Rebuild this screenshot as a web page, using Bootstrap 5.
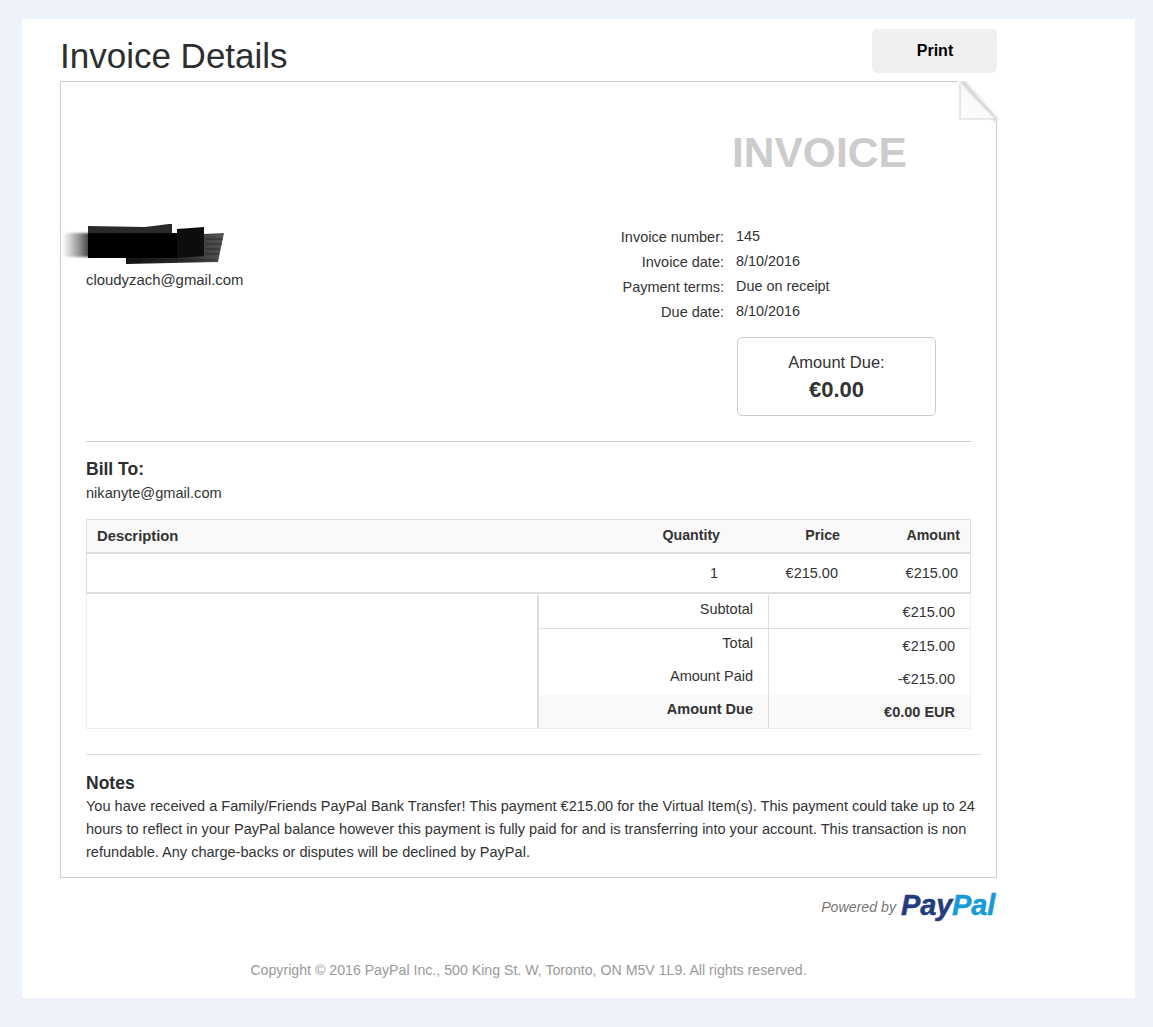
<!DOCTYPE html>
<html lang="en">
<head>
<meta charset="utf-8">
<title>Invoice Details</title>
<link href="https://cdn.jsdelivr.net/npm/bootstrap@5.3.0/dist/css/bootstrap.min.css" rel="stylesheet">
<style>
html,body{height:100%}
body{background:#eef2fa;font-family:"Liberation Sans",Arial,sans-serif;font-size:14.5px;color:#333;padding:19px 18px 29px 22px;}
.sheet{background:#fff;height:979px;padding:10px 138px 0 38px;}
.top-line{height:52px}
.page-title{font-size:35px;line-height:1;font-weight:400;margin:0;padding-top:9px;color:#2c2e2f}
.print-btn{width:125px;height:44px;background:#efefef;border:0;border-radius:5px;font-weight:700;font-size:16px;color:#000;padding:0 0 0 1px}
.paper{position:relative;border:1px solid #ccc;height:797px;padding:0 25px}
.fold{position:absolute;top:-1px;right:-2px;width:41px;height:44px}
.inv-word{font-size:42.5px;font-weight:700;color:#ccc;line-height:48px;padding:47px 0 0 646px;margin:0;height:105px}
.head-grid{height:254px}
.sender-col{padding-top:35px}
.redact{display:block;margin:0 0 0 -26px}
.sender-mail{font-size:14.9px;margin-top:-1px}
.meta-list{width:351px;padding-top:38px}
.meta-line{display:flex;height:25px;line-height:25px}
.meta-line .lbl{width:104px;text-align:right;white-space:nowrap}
.meta-line .val{margin-left:12px;margin-top:-1px;font-size:14.4px}
.due-box{width:199px;height:79px;border:1px solid #ccc;border-radius:5px;margin:12px 0 0 117px;text-align:center;padding-top:11px}
.due-box .t1{font-size:16.5px;line-height:26px}
.due-box .t2{font-size:22px;font-weight:700;line-height:30px}
.rule{border-top:1px solid #ccc;height:0}
.bill-h{font-size:17.5px;font-weight:700;line-height:20px;margin:17px 0 0;color:#2c2e2f}
.bill-mail{line-height:20px;margin-top:4px;height:34px;font-size:14.6px}
.items{width:885px;border:1px solid #ddd;margin-top:2px;border-collapse:separate;border-spacing:0}
.items th{background:#f9f9f9;font-weight:700;height:34px;border-bottom:2px solid #ddd;text-align:right;padding:0 10px;font-size:14.2px}
.items th.desc{font-size:14.8px}
.items td{height:39px;text-align:right;padding:2px 12px 0;border-bottom:1px solid #ddd}
.items .desc{text-align:left}
.sum-wrap{width:885px;height:135px;border:1px solid #eee;border-top:0;display:flex;justify-content:flex-end}
.sum-grid{width:433px;border-left:2px solid #ddd;margin-top:1px}
.sum-row{display:flex;height:33px}
.sum-row .a{width:230px;text-align:right;padding:0 15px 0 0;border-right:1px solid #ddd;line-height:29px}
.sum-row .b{flex:1;text-align:right;padding:0 15px 0 0;line-height:34px}
.sum-row.first{height:34px;border-bottom:1px solid #ddd}
.sum-row.strong{background:#f9f9f9;font-weight:700}
.notes-rule{width:895px;border-top:1px solid #ddd;margin-top:25px}
.notes-h{font-size:17.5px;font-weight:700;line-height:20px;margin:18px 0 0;color:#2c2e2f}
.notes-p{line-height:23px;margin:1px 0 0;padding-top:1px;width:895px;font-size:14.55px}
.powered{height:41px;padding-top:13px;padding-right:2px}
.powered i{font-size:14.2px;color:#777;margin-right:5px;vertical-align:2px}
.pp-logo{font-size:29px;font-weight:700;font-style:italic;line-height:28px;vertical-align:-1px;-webkit-text-stroke:.5px currentColor;letter-spacing:-.2px}
.pp-a{color:#253b80}.pp-b{color:#179bd7}
.copy{color:#999;text-align:center;padding-top:41px;width:937px;font-size:14.17px}
</style>
</head>
<body>
<div class="sheet">
  <div class="top-line d-flex justify-content-between align-items-start">
    <h1 class="page-title">Invoice Details</h1>
    <button class="print-btn btn" type="button">Print</button>
  </div>
  <div class="paper">
    <svg class="fold" viewBox="0 0 41 44" aria-hidden="true">
      <defs><linearGradient id="fg" x1="0" y1="1" x2="1" y2="0"><stop offset="0" stop-color="#fff"/><stop offset=".5" stop-color="#f9f9f9"/><stop offset="1" stop-color="#dfdfdf"/></linearGradient>
      <filter id="fb" x="-20%" y="-20%" width="140%" height="140%"><feGaussianBlur stdDeviation="1.4"/></filter></defs>
      <polygon points="0,0 41,0 41,44 39,44" fill="#fff"/>
      <path d="M4 -1L40 40" stroke="#cfcfcf" stroke-width="4" filter="url(#fb)"/>
      <polygon points="0,0 38,38 3,38 3,3" fill="url(#fg)"/>
      <path d="M3 3V38H38" fill="none" stroke="#d6d6d6" stroke-width="1.2"/>
      <path d="M39.5 41V44" stroke="#ccc"/>
    </svg>
    <p class="inv-word">INVOICE</p>
    <div class="head-grid d-flex justify-content-between">
      <div class="sender-col">
        <svg class="redact" width="170" height="48" viewBox="0 0 170 48" aria-hidden="true">
          <defs>
            <linearGradient id="sm" x1="0" x2="1" y1="0" y2="0"><stop offset="0" stop-color="#999" stop-opacity="0"/><stop offset=".45" stop-color="#888" stop-opacity=".7"/><stop offset="1" stop-color="#222"/></linearGradient>
            <linearGradient id="gr" x1="0" x2="1" y1="0" y2="0"><stop offset="0" stop-color="#111"/><stop offset=".65" stop-color="#333"/><stop offset="1" stop-color="#555"/></linearGradient>
            <filter id="rb" x="-10%" y="-20%" width="120%" height="140%"><feGaussianBlur stdDeviation="1"/></filter>
            <filter id="rc" x="-10%" y="-20%" width="120%" height="140%"><feGaussianBlur stdDeviation=".5"/></filter>
          </defs>
          <rect x="2" y="11" width="30" height="24" rx="4" fill="url(#sm)" filter="url(#rb)"/>
          <polygon points="66,34 140,28 143,12 164,11 158,40 66,42" fill="url(#gr)" filter="url(#rc)"/>
          <path d="M146 17H163M146 22H162M146 27H160M146 32H159M70 38H157" stroke="#111" stroke-width="1" opacity=".55"/>
          <polygon points="28,4 85,5 109,2 112,2 112,34 28,33" fill="#2a2a2a" filter="url(#rc)"/>
          <rect x="28" y="11" width="90" height="25" fill="#000" filter="url(#rc)"/>
          <polygon points="117,7 144,5 144,34 117,36" fill="#111" filter="url(#rc)"/>
        </svg>
        <div class="sender-mail">cloudyzach@gmail.com</div>
      </div>
      <div class="meta-list">
        <div class="meta-line"><span class="lbl">Invoice number:</span><span class="val">145</span></div>
        <div class="meta-line"><span class="lbl">Invoice date:</span><span class="val">8/10/2016</span></div>
        <div class="meta-line"><span class="lbl">Payment terms:</span><span class="val">Due on receipt</span></div>
        <div class="meta-line"><span class="lbl">Due date:</span><span class="val">8/10/2016</span></div>
        <div class="due-box"><div class="t1">Amount Due:</div><div class="t2">€0.00</div></div>
      </div>
    </div>
    <div class="rule"></div>
    <p class="bill-h">Bill To:</p>
    <div class="bill-mail">nikanyte@gmail.com</div>
    <table class="items">
      <thead><tr><th class="desc">Description</th><th style="width:100px">Quantity</th><th style="width:120px">Price</th><th style="width:120px">Amount</th></tr></thead>
      <tbody><tr><td></td><td>1</td><td>€215.00</td><td>€215.00</td></tr></tbody>
    </table>
    <div class="sum-wrap">
      <div class="sum-grid">
        <div class="sum-row first"><div class="a">Subtotal</div><div class="b">€215.00</div></div>
        <div class="sum-row"><div class="a">Total</div><div class="b">€215.00</div></div>
        <div class="sum-row"><div class="a">Amount Paid</div><div class="b">-€215.00</div></div>
        <div class="sum-row strong"><div class="a">Amount Due</div><div class="b">€0.00 EUR</div></div>
      </div>
    </div>
    <div class="notes-rule"></div>
    <p class="notes-h">Notes</p>
    <p class="notes-p">You have received a Family/Friends PayPal Bank Transfer! This payment €215.00 for the Virtual Item(s). This payment could take up to 24 hours to reflect in your PayPal balance however this payment is fully paid for and is transferring into your account. This transaction is non refundable. Any charge-backs or disputes will be declined by PayPal.</p>
  </div>
  <div class="powered text-end"><i>Powered by</i><span class="pp-logo"><span class="pp-a">Pay</span><span class="pp-b">Pal</span></span></div>
  <div class="copy">Copyright © 2016 PayPal Inc., 500 King St. W, Toronto, ON M5V 1L9. All rights reserved.</div>
</div>
<script src="https://cdn.jsdelivr.net/npm/bootstrap@5.3.0/dist/js/bootstrap.bundle.min.js"></script>
</body>
</html>
